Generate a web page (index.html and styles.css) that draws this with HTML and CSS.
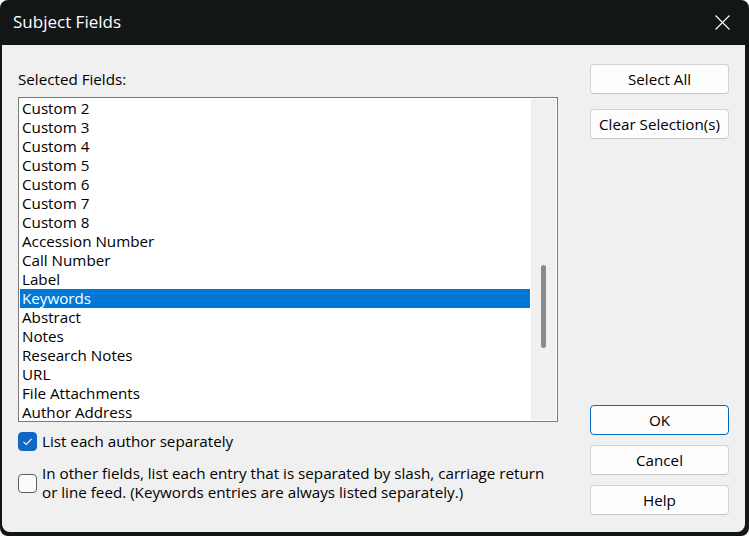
FILE: index.html
```html
<!DOCTYPE html>
<html>
<head>
<meta charset="utf-8">
<link rel="stylesheet" href="styles.css">
</head>
<body>
<div class="window">
  <div class="titlebar">
    <span class="title">Subject Fields</span>
    <svg class="close" width="15" height="15" viewBox="0 0 15 15"><path d="M0.5 0.5 L14.5 14.5 M14.5 0.5 L0.5 14.5" stroke="#ffffff" stroke-width="1.1" fill="none"/></svg>
  </div>
  <div class="panel">
    <div class="leftcol">
      <div class="label">Selected Fields:</div>
      <div class="listbox">
        <div class="items">
          <div class="item">Custom 2</div>
          <div class="item">Custom 3</div>
          <div class="item">Custom 4</div>
          <div class="item">Custom 5</div>
          <div class="item">Custom 6</div>
          <div class="item">Custom 7</div>
          <div class="item">Custom 8</div>
          <div class="item">Accession Number</div>
          <div class="item">Call Number</div>
          <div class="item">Label</div>
          <div class="item selected">Keywords</div>
          <div class="item">Abstract</div>
          <div class="item">Notes</div>
          <div class="item">Research Notes</div>
          <div class="item">URL</div>
          <div class="item">File Attachments</div>
          <div class="item">Author Address</div>
        </div>
        <div class="scrollbar"><div class="thumb"></div></div>
      </div>
      <div class="check-row first">
        <span class="box checked"><svg width="19" height="19" viewBox="0 0 19 19"><path d="M5.5 9.8 L8.2 12.4 L13.6 6.8" stroke="#ffffff" stroke-width="1.1" fill="none"/></svg></span>
        <span class="check-text">List each author separately</span>
      </div>
      <div class="check-row second">
        <span class="box"></span>
        <span class="check-text">In other fields, list each entry that is separated by slash, carriage return<br>or line feed. (Keywords entries are always listed separately.)</span>
      </div>
    </div>
    <div class="rightcol">
      <button class="btn">Select All</button>
      <button class="btn gap15">Clear Selection(s)</button>
      <div class="spacer"></div>
      <button class="btn default">OK</button>
      <button class="btn gap10">Cancel</button>
      <button class="btn gap10">Help</button>
    </div>
  </div>
</div>
</body>
</html>
```

FILE: styles.css
```css
html, body {
  margin: 0;
  padding: 0;
  background: #ffffff;
}
.window {
  width: 749px;
  height: 536px;
  background: #131617;
  border-radius: 8px;
  display: flex;
  flex-direction: column;
  overflow: hidden;
  font-family: "Open Sans", "Noto Sans", sans-serif;
  font-size: 15.2px;
  color: #000000;
}
.titlebar {
  height: 45px;
  flex: none;
  display: flex;
  align-items: center;
  justify-content: space-between;
  padding: 0 19px 0 13px;
  box-sizing: border-box;
}
.title {
  color: #ffffff;
  font-size: 17px;
  line-height: 20px;
  margin-top: -1px;
}
.close {
  display: block;
  margin-top: -1px;
}
.panel {
  flex: 1;
  margin: 0 4px 4px 2px;
  background: #f0f0f0;
  border-radius: 0 0 8px 8px;
  display: flex;
  padding: 0 16px 0 16px;
  box-sizing: border-box;
}
.leftcol {
  width: 540px;
  display: flex;
  flex-direction: column;
  padding-top: 25px;
}
.label {
  line-height: 19px;
  height: 19px;
}
.listbox {
  margin-top: 8px;
  width: 540px;
  height: 325px;
  box-sizing: border-box;
  border: 1px solid #7a7a7a;
  background: #ffffff;
  padding: 1px;
  display: flex;
  overflow: hidden;
}
.items {
  flex: 1;
  overflow: hidden;
}
.item {
  height: 19px;
  line-height: 19px;
  padding-left: 2px;
  white-space: nowrap;
}
.item.selected {
  background: #0078d7;
  color: #ffffff;
  margin-right: 1px;
}
.scrollbar {
  width: 25px;
  flex: none;
  background: #f0f0f0;
}
.thumb {
  width: 5px;
  height: 83px;
  margin: 166px 0 0 10px;
  background: #8a8a8a;
  border-radius: 3px;
}
.check-row {
  display: flex;
  align-items: center;
}
.check-row.first {
  margin-top: 10px;
  height: 19px;
}
.check-row.second {
  margin-top: 13px;
}
.box {
  width: 19px;
  height: 19px;
  box-sizing: border-box;
  border: 1px solid #5f5f5f;
  border-radius: 4px;
  background: #fbfbfb;
  flex: none;
  display: block;
}
.box.checked {
  background: #1167c4;
  border-color: #1167c4;
}
.box svg {
  display: block;
  margin: -1px;
}
.check-text {
  margin-left: 5px;
  line-height: 19px;
}
.rightcol {
  width: 139px;
  margin-left: 32px;
  display: flex;
  flex-direction: column;
  padding-top: 19px;
  padding-bottom: 17px;
}
.btn {
  height: 30px;
  width: 139px;
  box-sizing: border-box;
  border: 1px solid #d3d3d3;
  border-bottom-color: #c4c4c4;
  border-radius: 4px;
  background: #fdfdfd;
  font-family: inherit;
  font-size: 15.2px;
  color: #000000;
  padding: 0;
  line-height: 28px;
}
.btn.gap15 {
  margin-top: 15px;
}
.btn.gap10 {
  margin-top: 10px;
}
.btn.default {
  border: 1px solid #0067c0;
}
.spacer {
  flex: 1;
}
```
